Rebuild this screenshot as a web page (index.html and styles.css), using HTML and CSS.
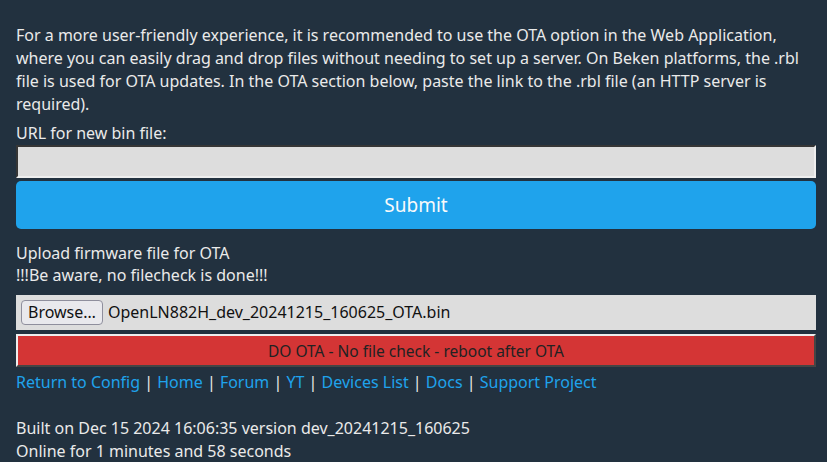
FILE: index.html
```html
<!DOCTYPE html>
<html lang="en">
<head>
    <meta charset="UTF-8">
    <meta name="viewport" content="width=device-width, initial-scale=1.0">
    <link rel="stylesheet" href="styles.css">
    <title>OTA</title>
</head>
<body>
    <main class="page">
        <p class="intro">For a more user-friendly experience, it is recommended to use the OTA option in the Web Application, where you can easily drag and drop files without needing to set up a server. On Beken platforms, the .rbl file is used for OTA updates. In the OTA section below, paste the link to the .rbl file (an HTTP server is required).</p>
        <!-- ota por url -->
        <form class="url-form">
            <label for="host">URL for new bin file:</label>
            <input type="text" id="host" class="url-input">
            <button type="button" class="submit">Submit</button>
        </form>
        <!-- ota por arquivo -->
        <div class="upload">
            <div>Upload firmware file for OTA</div>
            <div>!!!Be aware, no filecheck is done!!!</div>
        </div>
        <div class="file-box">
            <span class="browse">Browse…</span>
            <span class="file-name">OpenLN882H_dev_20241215_160625_OTA.bin</span>
        </div>
        <button type="button" class="do-ota">DO OTA - No file check - reboot after OTA</button>
        <nav class="links">
            <a href="#">Return to Config</a> | <a href="#">Home</a> | <a href="#">Forum</a> | <a href="#">YT</a> | <a href="#">Devices List</a> | <a href="#">Docs</a> | <a href="#">Support Project</a>
        </nav>
        <div class="info">
            <div>Built on Dec 15 2024 16:06:35 version dev_20241215_160625</div>
            <div>Online for 1 minutes and 58 seconds</div>
        </div>
    </main>
</body>
</html>
```

FILE: styles.css
```css
:root {
    --bg: #22313f;
    --text: #eaeaea;
    --link: #1fa3ec;
    --input-bg: #dddddd;
    --red: #d43535;
}
body {
    margin: 0;
    background-color: var(--bg);
    color: var(--text);
    font-family: "Noto Sans", "Open Sans", sans-serif;
    font-size: 16px;
    line-height: 23px;
}
.page {
    width: 800px;
    padding: 24px 0 0 16px;
}
.intro {
    margin: 0 0 6px;
}
.url-form {
    display: flex;
    flex-direction: column;
}
label {
    display: block;
}
.url-input {
    box-sizing: border-box;
    width: 100%;
    height: 33px;
    margin: 0;
    background-color: var(--input-bg);
    border: 2px inset #eeeeee;
    border-color: #8a8a8a #eeeeee #eeeeee #8a8a8a;
    font-size: 16px;
}
.submit {
    margin-top: 3px;
    width: 100%;
    height: 48px;
    border: 0;
    border-radius: 5px;
    background-color: var(--link);
    color: #fafafa;
    font-family: "Noto Sans", sans-serif;
    font-size: 19px;
}
.upload {
    margin-top: 13px;
    line-height: 22px;
}
.file-box {
    box-sizing: border-box;
    margin-top: 9px;
    height: 35px;
    background-color: var(--input-bg);
    display: flex;
    align-items: center;
    padding: 0 5px;
    color: #111;
}
.browse {
    border: 1px solid #8f8f9d;
    border-radius: 4px;
    background-color: #e9e9ed;
    padding: 0 6px;
    line-height: 23px;
    margin-right: 5px;
}
.do-ota {
    display: block;
    box-sizing: border-box;
    margin-top: 4px;
    width: 100%;
    height: 33px;
    background-color: var(--red);
    border: 2px outset #eeeeee;
    border-color: #eeeeee #999999 #999999 #eeeeee;
    color: #222;
    font-family: "Noto Sans", sans-serif;
    font-size: 15.5px;
}
.links {
    margin-top: 4px;
}
.links a {
    color: var(--link);
    text-decoration: none;
}
.info {
    margin-top: 23px;
}
```
